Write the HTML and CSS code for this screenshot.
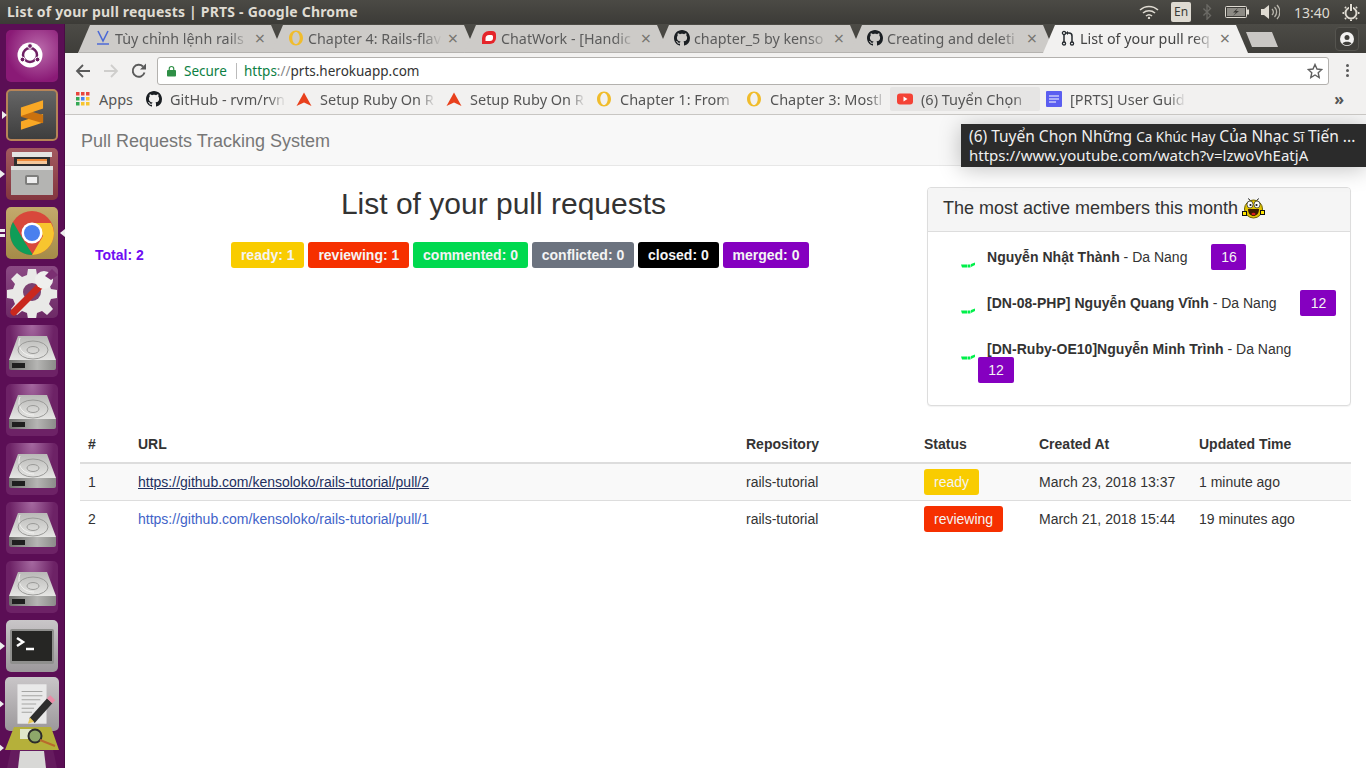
FILE: index.html
```html
<!DOCTYPE html>
<html lang="en">
<head>
    <meta charset="UTF-8">
    <meta name="viewport" content="width=device-width, initial-scale=1.0">
    <title>List of your pull requests | PRTS</title>
    <link rel="stylesheet" href="styles.css">
</head>
<body>
    <svg class="defs" aria-hidden="true">
        <defs>
            <linearGradient id="g-disk" x1="0" y1="0" x2="0" y2="1">
                <stop offset="0" stop-color="#b9b9b7"/>
                <stop offset="1" stop-color="#e6e6e4"/>
            </linearGradient>
            <linearGradient id="g-disk-front" x1="0" y1="0" x2="1" y2="0">
                <stop offset="0" stop-color="#6f6f6d"/>
                <stop offset=".6" stop-color="#b5b5b3"/>
                <stop offset="1" stop-color="#8b8b89"/>
            </linearGradient>
        </defs>
        <symbol id="i-github" viewBox="0 0 16 16">
            <path fill="#1b1f23" d="M8 0C3.58 0 0 3.58 0 8c0 3.54 2.29 6.53 5.47 7.59.4.07.55-.17.55-.38 0-.19-.01-.82-.01-1.49-2.01.37-2.53-.49-2.69-.94-.09-.23-.48-.94-.82-1.13-.28-.15-.68-.52-.01-.53.63-.01 1.08.58 1.23.82.72 1.21 1.87.87 2.33.66.07-.52.28-.87.51-1.07-1.78-.2-3.64-.89-3.64-3.95 0-.87.31-1.59.82-2.15-.08-.2-.36-1.02.08-2.12 0 0 .67-.21 2.2.82.64-.18 1.32-.27 2-.27.68 0 1.36.09 2 .27 1.53-1.04 2.2-.82 2.2-.82.44 1.1.16 1.92.08 2.12.51.56.82 1.27.82 2.15 0 3.07-1.87 3.75-3.65 3.95.29.25.54.73.54 1.48 0 1.07-.01 1.93-.01 2.2 0 .21.15.46.55.38A8.013 8.013 0 0016 8c0-4.42-3.58-8-8-8z"/>
        </symbol>
        <symbol id="i-ring" viewBox="0 0 16 16">
            <path fill="#f0bc2c" fill-rule="evenodd" d="M8 .5c4 0 7 3.400 7 7.500s-3 7.500-7 7.500S1 12.100 1 8 4 .5 8 .5zm0 1.500C6 2 4.300 4.700 4.300 8S6 14 8 14s3.700-2.700 3.700-6S10 2 8 2z"/>
        </symbol>
        <symbol id="i-peak" viewBox="0 0 16 16">
            <path fill="#e8401c" d="M8 1.500l7.500 13.500L8 11.500.5 15z"/>
        </symbol>
        <symbol id="i-disk" viewBox="0 0 52 52">
            <path fill="url(#g-disk)" d="M12 11h29l9 24H3z"/>
            <path fill="url(#g-disk-front)" d="M3 35h47v8a2 2 0 0 1-2 2H5a2 2 0 0 1-2-2z"/>
            <path fill="#1f1f1f" d="M6 38h13v5H6z"/>
            <path d="M14 13c-4 10 4 18 14 18" fill="none" stroke="#f3f3f1"/>
            <ellipse cx="27" cy="25" rx="15" ry="9" fill="none" stroke="#9a9a98"/>
            <ellipse cx="27" cy="25" rx="6" ry="3.500" fill="none" stroke="#9a9a98"/>
        </symbol>
        <symbol id="i-mark" viewBox="0 0 14 6">
            <path fill="#00f04a" d="M0 2.500h6v3H1zM6.500 2.500h3v3h-3zM10 2l4-1.500v2.500l-4 2z"/>
        </symbol>
    </svg>

    <div class="topbar">
        <span class="topbar-title">List of your pull requests | PRTS - Google Chrome</span>
        <div class="indicators">
            <svg class="ind-wifi" viewBox="0 0 20 14"><path d="M1 5a13 13 0 0 1 18 0M4 8a9 9 0 0 1 12 0M7 11a4.500 4.500 0 0 1 6 0" fill="none" stroke="#dfdbd2" stroke-width="1.500"/><circle cx="10" cy="13" r="1.200" fill="#dfdbd2"/></svg>
            <span class="ind-lang">En</span>
            <svg class="ind-bt" viewBox="0 0 10 18"><path d="M1 5l8 8-4 4V1l4 4-8 8" fill="none" stroke="#6b6a65" stroke-width="1.500"/></svg>
            <svg class="ind-battery" viewBox="0 0 24 12"><rect x=".5" y=".5" width="21" height="11" rx="1" fill="#3c3b37" stroke="#dfdbd2"/><rect x="22" y="3.500" width="2" height="5" fill="#dfdbd2"/><rect x="2" y="2" width="18" height="8" fill="#8d8b85"/><path d="M13 2l-5 4.500h3L8 10l6-5h-3z" fill="#3c3b37"/></svg>
            <svg class="ind-volume" viewBox="0 0 20 16"><path d="M1 5h3l5-4v14l-5-4H1z" fill="#dfdbd2"/><path d="M12 5a4 4 0 0 1 0 6M14.500 3a7 7 0 0 1 0 10M17 1a10 10 0 0 1 0 14" fill="none" stroke="#b9b6ad" stroke-width="1.300"/></svg>
            <span class="ind-time">13:40</span>
            <svg class="ind-power" viewBox="0 0 18 18"><circle cx="9" cy="10" r="5.500" fill="none" stroke="#dfdbd2" stroke-width="2"/><path d="M9 1v8" stroke="#3c3b37" stroke-width="4"/><path d="M9 1v7M9 16.500v1.500M2 10H.5M17.500 10H16M4 5L3 4M14 5l1-1M4 15l-1 1M14 15l1 1" stroke="#dfdbd2" stroke-width="2"/></svg>
        </div>
    </div>

    <div class="desktop">
        <nav class="launcher">
            <div class="tile tile-dash">
                <svg viewBox="0 0 52 52"><circle cx="24" cy="25" r="12.500" fill="#fff"/><circle cx="24" cy="25" r="7" fill="none" stroke="#6e1f63" stroke-width="2.500"/><circle cx="24" cy="16" r="2.400" fill="#6e1f63" stroke="#fff"/><circle cx="16.500" cy="29.500" r="2.400" fill="#6e1f63" stroke="#fff"/><circle cx="31.500" cy="29.500" r="2.400" fill="#6e1f63" stroke="#fff"/></svg>
            </div>
            <div class="tile tile-sublime running">
                <svg viewBox="0 0 52 52"><path fill="#f9a825" d="M14 33l24-8v9l-24 8z"/><path fill="#c9710f" d="M14 19l24 7v9l-24-7z"/><path fill="#f9a825" d="M14 18l24-8v9l-24 8z"/></svg>
            </div>
            <div class="tile tile-files running">
                <svg viewBox="0 0 52 52"><path fill="#e4e4e2" d="M6 4h40v5H6z"/><path fill="#2f2f2f" d="M8 9h36v9H8z"/><path fill="#ef8b3c" d="M11 11h30v2H11z"/><path fill="#f3c79a" d="M11 13h30v3H11z"/><path fill="#e0e0de" d="M5 18h42v4H5z"/><path fill="#b4b4b2" d="M5 22h42v25H5z"/><rect x="19" y="27" width="14" height="10" rx="2" fill="#7e7e7c"/><rect x="21" y="29" width="10" height="6" fill="#eee"/></svg>
            </div>
            <div class="tile tile-chrome running both">
                <svg viewBox="0 0 52 52"><circle cx="26" cy="26" r="22" fill="#d8483b"/><path fill="#0f9d58" d="M26 48A22 22 0 0 1 7 15l11 19 9 14z"/><path fill="#f7c52f" d="M48 26a22 22 0 0 1-22 22l11-19-11-13h19a22 22 0 0 1 3 10z"/><circle cx="26" cy="26" r="10.500" fill="#fff"/><circle cx="26" cy="26" r="8" fill="#4a80ee"/></svg>
            </div>
            <div class="tile">
                <svg viewBox="0 0 52 52"><path fill="#e9e9e7" d="M22 3h8l1 6 5 2 5-4 6 6-4 5 2 5 6 1v8l-6 1-2 5 4 5-6 6-5-4-5 2-1 6h-8l-1-6-5-2-5 4-6-6 4-5-2-5-6-1v-8l6-1 2-5-4-5 6-6 5 4 5-2z"/><circle cx="26" cy="26" r="9" fill="#7b4070"/><path d="M8 46L33 21" stroke="#c9281e" stroke-width="7" stroke-linecap="round"/><circle cx="38" cy="14" r="9" fill="#efefed"/><path d="M39 10L46 3l6 6-7 5z" fill="#7b2f72"/></svg>
            </div>
            <div class="tile tile-disk"><svg viewBox="0 0 52 52"><use href="#i-disk"/></svg></div>
            <div class="tile tile-disk"><svg viewBox="0 0 52 52"><use href="#i-disk"/></svg></div>
            <div class="tile tile-disk"><svg viewBox="0 0 52 52"><use href="#i-disk"/></svg></div>
            <div class="tile tile-disk"><svg viewBox="0 0 52 52"><use href="#i-disk"/></svg></div>
            <div class="tile tile-disk"><svg viewBox="0 0 52 52"><use href="#i-disk"/></svg></div>
            <div class="tile tile-term running">
                <svg viewBox="0 0 52 52"><rect x="4" y="9" width="44" height="35" rx="2" fill="#8f8f8d"/><rect x="6" y="11" width="40" height="30" fill="#262624"/><path d="M11 18l6 4-6 4" fill="none" stroke="#fff" stroke-width="2.500"/><path d="M20 29h8" stroke="#fff" stroke-width="2.500"/></svg>
            </div>
            <div class="tile tile-edit running">
                <svg viewBox="0 0 52 52"><rect x="12" y="7" width="28" height="38" fill="#e9e9e9"/><path d="M16 14h20M16 18h20M16 22h18M16 26h14M16 30h12M16 34h10" stroke="#a5a5a3"/><path d="M26 42l17-19" stroke="#2d2d2d" stroke-width="7"/><path d="M43 23l3-3" stroke="#e98ba6" stroke-width="7"/><path d="M22 45l2-6 4 4z" fill="#e8c95a"/></svg>
            </div>
            <div class="tile-trash running">
                <svg viewBox="0 0 54 41"><path fill="#651b5e" d="M6 22h42l4 19H2z"/><path fill="#d8d8d6" d="M15 24h24l2 17H13z"/><path fill="#b5b03a" d="M9 0h37l8 23H0z"/><rect x="15" y="2" width="16" height="10" fill="#dfe6c8"/><circle cx="30" cy="9" r="6.500" fill="#8ea86a" stroke="#2b2b2b" stroke-width="2"/><path d="M35 13l15 6" stroke="#b96a2c" stroke-width="2"/></svg>
            </div>
        </nav>

        <div class="window">
            <div class="tabstrip">
                <div class="tab">
                    <svg class="favicon" viewBox="0 0 16 16"><path d="M3 1l5 10 5-10M2 14h12" fill="none" stroke="#4d6bd6" stroke-width="1.600"/></svg>
                    <span class="tab-label">Tùy chỉnh lệnh rails</span>
                    <span class="tab-close">×</span>
                </div>
                <div class="tab">
                    <svg class="favicon"><use href="#i-ring"/></svg>
                    <span class="tab-label">Chapter 4: Rails-flav</span>
                    <span class="tab-close">×</span>
                </div>
                <div class="tab">
                    <svg class="favicon" viewBox="0 0 16 16"><path fill="#e5252a" d="M8 1h3a4 4 0 0 1 4 4v3a6 6 0 0 1-6 6H1V8a7 7 0 0 1 7-7z"/><path fill="#fff" d="M8 5h2.500A1.500 1.500 0 0 1 12 6.500V8a3 3 0 0 1-3 3H4.500V8.500A3.500 3.500 0 0 1 8 5z"/></svg>
                    <span class="tab-label">ChatWork - [Handic</span>
                    <span class="tab-close">×</span>
                </div>
                <div class="tab">
                    <svg class="favicon"><use href="#i-github"/></svg>
                    <span class="tab-label">chapter_5 by kenso</span>
                    <span class="tab-close">×</span>
                </div>
                <div class="tab">
                    <svg class="favicon"><use href="#i-github"/></svg>
                    <span class="tab-label">Creating and deleti</span>
                    <span class="tab-close">×</span>
                </div>
                <div class="tab tab-active">
                    <svg class="favicon" viewBox="0 0 16 16"><path d="M4 4v9M12 6v7M12 6a3 3 0 0 0-3-3H7" fill="none" stroke="#24292e" stroke-width="1.500"/><path d="M8 1L5.500 3 8 5z" fill="#24292e"/><circle cx="4" cy="3" r="1.600" fill="none" stroke="#24292e" stroke-width="1.300"/><circle cx="4" cy="13.400" r="1.600" fill="none" stroke="#24292e" stroke-width="1.300"/><circle cx="12" cy="13.400" r="1.600" fill="none" stroke="#24292e" stroke-width="1.300"/></svg>
                    <span class="tab-label">List of your pull req</span>
                    <span class="tab-close">×</span>
                </div>
                <div class="tab-new"></div>
                <div class="profile">
                    <svg viewBox="0 0 14 14"><circle cx="7" cy="7" r="7" fill="#f2f1f0"/><circle cx="7" cy="5.500" r="2.500" fill="#3f3e3a"/><path d="M2.500 11.500c1-2.500 8-2.500 9 0a6.500 6.500 0 0 1-9 0z" fill="#3f3e3a"/></svg>
                </div>
            </div>

            <div class="toolbar">
                <svg class="nav-icon" viewBox="0 0 16 16"><path d="M15 8H2M8 2L2 8l6 6" fill="none" stroke="#5a5a5a" stroke-width="1.800"/></svg>
                <svg class="nav-icon" viewBox="0 0 16 16"><path d="M1 8h13M8 2l6 6-6 6" fill="none" stroke="#cfcecc" stroke-width="1.800"/></svg>
                <svg class="nav-icon" viewBox="0 0 16 16"><path d="M13.500 9.500A6 6 0 1 1 12 3.500" fill="none" stroke="#5a5a5a" stroke-width="1.900"/><path d="M9 6.500h6v-6z" fill="#5a5a5a"/></svg>
                <div class="omnibox">
                    <svg class="lock" viewBox="0 0 10 12"><path d="M2.500 5V3.500a2.500 2.500 0 0 1 5 0V5" fill="none" stroke="#2f8f46" stroke-width="1.300"/><rect y="5" width="10" height="7" rx="1" fill="#2f8f46"/></svg>
                    <span class="secure">Secure</span>
                    <span class="omni-sep"></span>
                    <span class="url"><span class="url-scheme">https</span><span class="url-dim">://</span>prts.herokuapp.com</span>
                    <svg class="star" viewBox="0 0 16 16"><path d="M8 1.500l2 4.500 4.800.500-3.600 3.200 1 4.800L8 12l-4.200 2.500 1-4.800L1.200 6.500 6 6z" fill="none" stroke="#5f5f5f" stroke-width="1.400"/></svg>
                </div>
                <div class="menu-dots"><i></i><i></i><i></i></div>
            </div>

            <div class="bookmarks">
                <div class="bm bm-apps">
                    <svg class="bm-icon" viewBox="0 0 14 14"><rect width="3.500" height="3.500" fill="#e8453c"/><rect x="5" width="3.500" height="3.500" fill="#e8453c"/><rect x="10" width="3.500" height="3.500" fill="#e8453c"/><rect y="5" width="3.500" height="3.500" fill="#34a853"/><rect x="5" y="5" width="3.500" height="3.500" fill="#4a80ee"/><rect x="10" y="5" width="3.500" height="3.500" fill="#f7c52f"/><rect y="10" width="3.500" height="3.500" fill="#34a853"/><rect x="5" y="10" width="3.500" height="3.500" fill="#f7c52f"/><rect x="10" y="10" width="3.500" height="3.500" fill="#f7c52f"/></svg>
                    <span class="bm-label">Apps</span>
                </div>
                <div class="bm"><svg class="bm-icon"><use href="#i-github"/></svg><span class="bm-label">GitHub - rvm/rvn</span></div>
                <div class="bm"><svg class="bm-icon"><use href="#i-peak"/></svg><span class="bm-label">Setup Ruby On R</span></div>
                <div class="bm"><svg class="bm-icon"><use href="#i-peak"/></svg><span class="bm-label">Setup Ruby On R</span></div>
                <div class="bm"><svg class="bm-icon"><use href="#i-ring"/></svg><span class="bm-label">Chapter 1: From</span></div>
                <div class="bm"><svg class="bm-icon"><use href="#i-ring"/></svg><span class="bm-label">Chapter 3: Mostl</span></div>
                <div class="bm bm-hover">
                    <svg class="bm-icon" viewBox="0 0 16 16"><rect y="2.500" width="16" height="11" rx="3" fill="#f44336"/><path d="M6.500 5.500l4 2.500-4 2.500z" fill="#fff"/></svg>
                    <span class="bm-label">(6) Tuyển Chọn</span>
                </div>
                <div class="bm">
                    <svg class="bm-icon" viewBox="0 0 16 16"><rect width="16" height="16" rx="1" fill="#5b5ef0"/><path d="M3 5h10M3 8h10M3 11h7" stroke="#fff" stroke-width="1.200"/></svg>
                    <span class="bm-label">[PRTS] User Guid</span>
                </div>
                <span class="bm-more">»</span>
            </div>

            <main class="page">
                <header class="navbar">
                    <span class="brand">Pull Requests Tracking System</span>
                </header>

                <div class="tooltip">
                    <div class="tooltip-title">(6) Tuyển Chọn Những <span class="tooltip-small">Ca Khúc Hay</span> Của Nhạc <span class="tooltip-small">Sĩ</span> Tiến ...</div>
                    <div>https://www.youtube.com/watch?v=lzwoVhEatjA</div>
                </div>

                <div class="container">
                    <div class="overview">
                        <section class="summary">
                            <h1 class="title">List of your pull requests</h1>
                            <div class="stats">
                                <span class="total">Total: 2</span>
                                <div class="stat-list">
                                    <span class="badge badge-ready">ready: 1</span>
                                    <span class="badge badge-reviewing">reviewing: 1</span>
                                    <span class="badge badge-commented">commented: 0</span>
                                    <span class="badge badge-conflicted">conflicted: 0</span>
                                    <span class="badge badge-closed">closed: 0</span>
                                    <span class="badge badge-merged">merged: 0</span>
                                </div>
                            </div>
                        </section>

                        <aside class="card">
                            <div class="card-heading">
                                The most active members this month
                                <svg class="emoji" viewBox="0 0 23 22"><circle cx="11.500" cy="12" r="9" fill="#e3c400" stroke="#6d6200"/><ellipse cx="8" cy="7.500" rx="3" ry="3.500" fill="#fff" stroke="#333" stroke-width=".8"/><ellipse cx="15" cy="7.500" rx="3" ry="3.500" fill="#fff" stroke="#333" stroke-width=".8"/><circle cx="8.500" cy="8" r="1.100" fill="#111"/><circle cx="14.500" cy="8" r="1.100" fill="#111"/><path d="M6 12h11c0 5-3 7-5.500 7S6 17 6 12z" fill="#3a1c00"/><ellipse cx="11.500" cy="17" rx="2" ry="1.200" fill="#d81e1e"/><rect x=".5" y="14.500" width="4" height="4" fill="#ffe600" stroke="#111"/><rect x="18.500" y="13.500" width="4" height="4" fill="#ffe600" stroke="#111"/><path d="M6 1.500l2 1.500M17 1.500L15 3" stroke="#333"/></svg>
                            </div>
                            <ul class="members">
                                <li class="member">
                                    <svg class="member-mark"><use href="#i-mark"/></svg>
                                    <div class="member-body">
                                        <span class="member-name"><strong>Nguyễn Nhật Thành</strong> - Da Nang</span>
                                        <span class="count">16</span>
                                    </div>
                                </li>
                                <li class="member">
                                    <svg class="member-mark"><use href="#i-mark"/></svg>
                                    <div class="member-body">
                                        <span class="member-name"><strong>[DN-08-PHP] Nguyễn Quang Vĩnh</strong> - Da Nang</span>
                                        <span class="count">12</span>
                                    </div>
                                </li>
                                <li class="member member-wrapped">
                                    <svg class="member-mark"><use href="#i-mark"/></svg>
                                    <div class="member-body">
                                        <span class="member-name"><strong>[DN-Ruby-OE10]Nguyễn Minh Trình</strong> - Da Nang</span>
                                        <span class="count">12</span>
                                    </div>
                                </li>
                            </ul>
                        </aside>
                    </div>

                    <table class="pull-table">
                        <thead>
                            <tr>
                                <th class="col-num">#</th>
                                <th class="col-url">URL</th>
                                <th class="col-repo">Repository</th>
                                <th class="col-status">Status</th>
                                <th class="col-created">Created At</th>
                                <th>Updated Time</th>
                            </tr>
                        </thead>
                        <tbody>
                            <tr class="row-odd">
                                <td>1</td>
                                <td><a class="link link-hover" href="#">https://github.com/kensoloko/rails-tutorial/pull/2</a></td>
                                <td>rails-tutorial</td>
                                <td><span class="badge status badge-ready">ready</span></td>
                                <td>March 23, 2018 13:37</td>
                                <td>1 minute ago</td>
                            </tr>
                            <tr>
                                <td>2</td>
                                <td><a class="link" href="#">https://github.com/kensoloko/rails-tutorial/pull/1</a></td>
                                <td>rails-tutorial</td>
                                <td><span class="badge status badge-reviewing">reviewing</span></td>
                                <td>March 21, 2018 15:44</td>
                                <td>19 minutes ago</td>
                            </tr>
                        </tbody>
                    </table>
                </div>
            </main>
        </div>
    </div>
</body>
</html>
```

FILE: styles.css
```css
* {
    margin: 0;
    padding: 0;
    box-sizing: border-box;
}

html, body {
    height: 100%;
    overflow: hidden;
}

body {
    font-family: "Noto Sans", sans-serif;
    font-size: 14px;
    background: #fff;
}

.defs {
    position: absolute;
    width: 0;
    height: 0;
}

/* desktop top panel */
.topbar {
    height: 24px;
    display: flex;
    align-items: center;
    justify-content: space-between;
    padding: 0 6px 0 7px;
    background: linear-gradient(#4b4a45, #3c3b37);
    color: #dfdbd2;
}

.topbar-title {
    font-size: 14px;
    font-weight: 700;
    letter-spacing: 0.2px;
    margin-bottom: 2px;
}

.indicators {
    display: flex;
    align-items: center;
}

.ind-wifi {
    width: 20px;
    height: 14px;
    margin-right: 12px;
}

.ind-lang {
    width: 20px;
    height: 20px;
    background: #dfdbd2;
    color: #3c3b37;
    border-radius: 2px;
    font-size: 12px;
    line-height: 20px;
    text-align: center;
    margin-right: 11px;
}

.ind-bt {
    width: 10px;
    height: 16px;
    margin-right: 13px;
}

.ind-battery {
    width: 24px;
    height: 12px;
    margin-right: 11px;
}

.ind-volume {
    width: 20px;
    height: 16px;
    margin-right: 14px;
}

.ind-time {
    font-size: 14px;
    width: 35px;
    margin-right: 13px;
    color: #dfdbd2;
}

.ind-power {
    width: 18px;
    height: 18px;
}

.desktop {
    display: flex;
    height: 744px;
}

/* launcher */
.launcher {
    width: 65px;
    flex-shrink: 0;
    background: #5b0e55;
    display: flex;
    flex-direction: column;
    align-items: center;
    gap: 7px;
    padding: 6px 7px 0 6px;
    border-right: 1px solid #4a0b45;
}

.tile {
    position: relative;
    width: 52px;
    height: 52px;
    flex-shrink: 0;
    border-radius: 5px;
    background: linear-gradient(#8b4a84, #6d2a66);
}

.tile svg, .tile-trash svg {
    display: block;
    width: 100%;
    height: 100%;
}

.tile-dash {
    background: radial-gradient(circle at 62% 38%, #bb6cac, #8a1a76 70%);
}

.tile-sublime {
    background: linear-gradient(#656565, #3e3e3e);
    border: 2px solid #b68457;
}

.tile-files {
    background: linear-gradient(#a25a5f, #83363f);
}

.tile-chrome {
    background: linear-gradient(#c4aa6c, #a58b48);
}

.tile-disk {
    background: radial-gradient(ellipse at 50% 0, #a569a0, #6d2266 60%);
}

.tile-term {
    background: linear-gradient(#c9c6c8, #9c989b);
}

.tile-edit {
    background: linear-gradient(#c9c6c8, #9c989b);
    width: 54px;
    height: 54px;
    margin-top: -2px;
}

.tile-trash {
    position: relative;
    width: 54px;
    height: 41px;
    flex-shrink: 0;
    margin-top: -11px;
}

.running::before {
    content: "";
    position: absolute;
    left: -6px;
    top: 50%;
    margin-top: -4px;
    border: 4px solid transparent;
    border-left: 5px solid #eee;
}

.both::before {
    left: -6px;
    width: 5px;
    height: 3px;
    border: 0;
    background: #eee;
    box-shadow: 0 5px #eee;
}

.both::after {
    content: "";
    position: absolute;
    right: -7px;
    top: 50%;
    margin-top: -4px;
    border: 4px solid transparent;
    border-right: 5px solid #eee;
}

/* browser */
.window {
    flex: 1;
    min-width: 0;
    display: flex;
    flex-direction: column;
}

.tabstrip {
    height: 29px;
    display: flex;
    align-items: flex-end;
    padding-left: 13px;
    background: linear-gradient(#4c4b46, #3f3e3a);
}

.tab {
    width: 205px;
    height: 28px;
    margin-right: -12px;
    display: flex;
    align-items: center;
    padding: 0 16px 2px 17px;
    background: #cdcbc8;
    box-shadow: inset 0 -1px #b5b3b0;
    clip-path: polygon(0 100%, 12px 0, calc(100% - 12px) 0, 100% 100%);
    color: #5b5b5b;
}

.tab-active {
    background: #f2f1f0;
    box-shadow: none;
    position: relative;
    z-index: 1;
    color: #444;
}

.favicon {
    width: 16px;
    height: 16px;
    flex-shrink: 0;
    margin-right: 4px;
}

.tab-label {
    flex: 1;
    min-width: 0;
    overflow: hidden;
    white-space: nowrap;
    font-size: 14.300px;
    -webkit-mask-image: linear-gradient(to right, #000 85%, transparent);
    mask-image: linear-gradient(to right, #000 85%, transparent);
}

.tab-close {
    width: 14px;
    margin-left: 4px;
    text-align: center;
    font-size: 18px;
    line-height: 18px;
    color: #77756f;
}

.tab-new {
    width: 32px;
    height: 15px;
    margin: 0 0 6px 10px;
    background: #c9c7c4;
    clip-path: polygon(0 0, 26px 0, 100% 100%, 6px 100%);
}

.profile {
    width: 24px;
    height: 24px;
    margin-left: auto;
    margin-right: 7px;
    align-self: center;
    background: #3f3e3a;
    border: 1px solid #55544f;
    border-radius: 4px;
    display: flex;
    align-items: center;
    justify-content: center;
}

.profile svg {
    width: 14px;
    height: 14px;
}

.toolbar {
    height: 33px;
    display: flex;
    align-items: center;
    padding: 2px 0 0 10px;
    background: #f2f1f0;
}

.nav-icon {
    width: 16px;
    height: 16px;
    margin-right: 12px;
    flex-shrink: 0;
}

.omnibox {
    width: 1172px;
    height: 28px;
    margin-left: -2px;
    display: flex;
    align-items: center;
    padding: 0 5px 0 9px;
    background: #fff;
    border: 1px solid #b3b1ae;
    border-radius: 3px;
}

.lock {
    width: 9px;
    height: 12px;
    margin-right: 8px;
}

.secure {
    width: 44px;
    color: #0b8043;
    font-size: 13.500px;
}

.omni-sep {
    width: 1px;
    height: 16px;
    background: #bbb;
    margin: 0 7px 0 8px;
}

.url {
    flex: 1;
    font-size: 13.500px;
    color: #333;
}

.url-scheme {
    color: #0b8043;
}

.url-dim {
    color: #888;
}

.star {
    width: 16px;
    height: 16px;
}

.menu-dots {
    width: 37px;
    display: flex;
    flex-direction: column;
    align-items: center;
    gap: 2px;
}

.menu-dots i {
    width: 3px;
    height: 3px;
    background: #5a5a5a;
    border-radius: 50%;
}

.bookmarks {
    height: 29px;
    display: flex;
    align-items: center;
    padding: 0 0 2px 11px;
    background: #f2f1f0;
    border-bottom: 1px solid #c8c6c3;
}

.bm {
    width: 150px;
    height: 24px;
    flex-shrink: 0;
    display: flex;
    align-items: center;
    padding-right: 10px;
    color: #555;
}

.bm-apps {
    width: 70px;
}

.bm-hover {
    background: #e6e5e4;
    border-radius: 2px;
    margin-left: -6px;
    margin-right: 6px;
    padding-left: 7px;
}

.bm-icon {
    width: 16px;
    height: 16px;
    flex-shrink: 0;
    margin-right: 8px;
}

.bm-apps .bm-icon {
    width: 14px;
    height: 14px;
    margin-right: 9px;
}

.bm-label {
    flex: 1;
    min-width: 0;
    overflow: hidden;
    white-space: nowrap;
    font-size: 14.500px;
    -webkit-mask-image: linear-gradient(to right, #000 85%, transparent);
    mask-image: linear-gradient(to right, #000 85%, transparent);
}

.bm-apps .bm-label {
    -webkit-mask-image: none;
    mask-image: none;
}

.bm-more {
    margin-left: auto;
    margin-right: 22px;
    font-size: 16px;
    font-weight: 700;
    color: #555;
}

/* the page in the tab */
.page {
    flex: 1;
    position: relative;
    background: #fff;
    font-family: "Liberation Sans", Arial, sans-serif;
    color: #333;
    line-height: 20px;
    overflow: hidden;
}

.navbar {
    height: 51px;
    display: flex;
    align-items: center;
    padding: 2px 0 0 16px;
    background: #f8f8f8;
    border-bottom: 1px solid #e7e7e7;
}

.brand {
    font-size: 18px;
    color: #777;
}

.tooltip {
    position: absolute;
    left: 896px;
    top: 9px;
    width: 405px;
    height: 43px;
    padding: 3px 8px;
    background: #2b2b2b;
    color: #f0f0f0;
    font-family: "Noto Sans", sans-serif;
    font-size: 15px;
    line-height: 19px;
    white-space: nowrap;
    box-shadow: 0 2px 22px rgba(0, 0, 0, 0.25);
}

.tooltip-title {
    height: 19px;
    font-size: 15.500px;
}

.tooltip-small {
    font-size: 13.500px;
}

.container {
    padding: 21px 15px 0;
}

.overview {
    display: flex;
    margin-bottom: 20px;
}

.summary {
    flex: 1;
    min-width: 0;
}

.title {
    font-size: 30px;
    font-weight: 400;
    line-height: 33px;
    text-align: center;
    margin-bottom: 22px;
}

.stats {
    display: flex;
    align-items: center;
}

.total {
    width: 151px;
    padding-left: 15px;
    font-weight: 700;
    color: #6f0df2;
}

.stat-list {
    display: flex;
    gap: 4px;
}

.badge {
    display: inline-block;
    height: 26px;
    line-height: 26px;
    padding: 0 9.900px;
    border-radius: 3px;
    font-weight: 700;
    color: #f4f4f4;
}

.badge.status {
    font-weight: 400;
    padding: 0 10px;
    vertical-align: middle;
}

.badge-ready { background: #f9cc00; }
.badge-reviewing { background: #f63000; }
.badge-commented { background: #00d94f; }
.badge-conflicted { background: #6c737f; }
.badge-closed { background: #000; }
.badge-merged { background: #8500c0; }

.card {
    width: 424px;
    flex-shrink: 0;
    background: #fff;
    border: 1px solid #ddd;
    border-radius: 4px;
    box-shadow: 0 1px 1px rgba(0, 0, 0, 0.05);
}

.card-heading {
    height: 44px;
    display: flex;
    align-items: center;
    padding: 0 0 4px 15px;
    background: #f5f5f5;
    border-bottom: 1px solid #ddd;
    border-radius: 3px 3px 0 0;
    font-size: 18px;
    white-space: nowrap;
}

.emoji {
    width: 23px;
    height: 22px;
    margin-left: 4px;
}

.members {
    list-style: none;
    padding: 12px 10px 2px 33px;
}

.member {
    display: flex;
    margin-bottom: 20px;
}

.member-mark {
    width: 14px;
    height: 6px;
    flex-shrink: 0;
    margin: 18px 3px 0 0;
}

.member-body {
    flex: 1;
    min-width: 0;
    display: flex;
    flex-wrap: wrap;
    align-items: center;
}

.member-name {
    padding-left: 9px;
    margin-right: 24px;
    line-height: 26px;
}

.member-name strong {
    letter-spacing: 0.03px;
}

.count {
    width: 36px;
    height: 26px;
    line-height: 26px;
    text-align: center;
    background: #8500c0;
    color: #f4f4f4;
    border-radius: 2px;
}

.member:first-child .count {
    width: 35px;
}

.member-wrapped .count {
    margin-top: -5px;
}

.pull-table {
    width: 100%;
    table-layout: fixed;
    border-collapse: collapse;
}

.pull-table th {
    padding: 8px;
    text-align: left;
    border-bottom: 2px solid #ddd;
}

.pull-table td {
    height: 37px;
    padding: 0 8px;
    border-top: 1px solid #ddd;
}

.pull-table tbody tr:first-child td {
    border-top: 0;
}

.col-num { width: 50px; }
.col-url { width: 608px; }
.col-repo { width: 178px; }
.col-status { width: 115px; }
.col-created { width: 160px; }

.row-odd {
    background: #f9f9f9;
}

.link {
    color: #3f63c8;
    text-decoration: none;
}

.link-hover {
    color: #23305f;
    text-decoration: underline;
}
```
